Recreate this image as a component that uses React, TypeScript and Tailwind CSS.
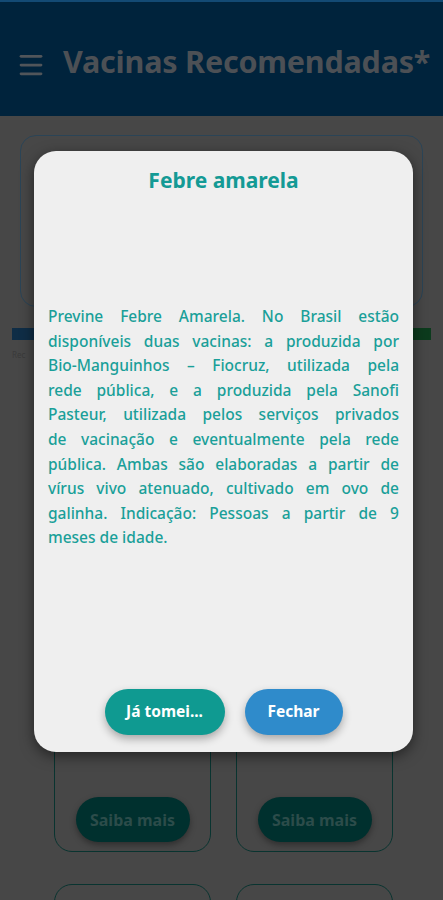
import { Menu } from 'lucide-react'

const bodyLines = [
  'Previne Febre Amarela. No Brasil estão',
  'disponíveis duas vacinas: a produzida por',
  'Bio-Manguinhos – Fiocruz, utilizada pela',
  'rede pública, e a produzida pela Sanofi',
  'Pasteur, utilizada pelos serviços privados',
  'de vacinação e eventualmente pela rede',
  'pública. Ambas são elaboradas a partir de',
  'vírus vivo atenuado, cultivado em ovo de',
  'galinha. Indicação: Pessoas a partir de 9',
  'meses de idade.',
]

const VaccineCard = ({ showButton = true }: { showButton?: boolean }) => (
  <div className="h-[480px] rounded-[18px] border-[1.5px] border-[#093430] flex flex-col items-center justify-end pb-[9px]">
    {showButton && (
      <button className="w-[114px] h-[45px] rounded-full bg-[#00302e] text-[#2c4c4a] text-[16px] font-bold shadow-[0_3px_6px_rgba(0,0,0,0.35)]">
        Saiba mais
      </button>
    )}
  </div>
)

const App = () => {
  return (
    <div className="relative w-[443px] h-[900px] overflow-hidden bg-[#474747] font-['Noto_Sans',sans-serif]">
      {/* Header */}
      <div className="h-[116px] bg-[#00233c] border-t-[2px] border-[#134a74] flex items-center pl-[16px] pt-[12px]">
        <Menu className="w-[30px] h-[30px] text-[#50555a]" strokeWidth={2.2} />
        <h1 className="ml-[17px] mb-[7px] text-[30.5px] font-bold text-[#4c5055] tracking-[-0.2px]">
          Vacinas Recomendadas*
        </h1>
      </div>

      {/* Page content behind the dialog */}
      <div className="px-[20px] pt-[19px]">
        <div className="h-[172px] rounded-[16px] border-[1.5px] border-[#2b4456]" />
      </div>
      <div className="mx-[12px] mt-[21px] h-[12px] flex">
        <div className="flex-1 bg-[#0f2d46]" />
        <div className="w-[21px] bg-[#0c3b1d]" />
      </div>
      <p className="ml-[12px] mt-[10px] text-[8px] leading-[10px] text-[#3a3a3a]">Rec</p>
      <div className="grid grid-cols-[157px_157px] gap-x-[25px] gap-y-[32px] px-[54px] mt-[12px]">
        <VaccineCard />
        <VaccineCard />
        <VaccineCard showButton={false} />
        <VaccineCard showButton={false} />
      </div>

      {/* Dialog */}
      <div className="absolute left-[34px] top-[151px] w-[379px] h-[601px] rounded-[22px] bg-[#efefef] shadow-[0_4px_14px_rgba(0,0,0,0.5)] flex flex-col px-[14px]">
        <h2 className="mt-[15px] text-center text-[21px] leading-[28px] font-bold text-[#149a95]">
          Febre amarela
        </h2>
        <div className="mt-[110px] text-[15.5px] leading-[24.6px] font-medium text-[#1a9f99]">
          {bodyLines.map((line, i) => (
            <span
              key={i}
              className={
                i < bodyLines.length - 1
                  ? 'block text-justify [text-align-last:justify]'
                  : 'block'
              }
            >
              {line}
            </span>
          ))}
        </div>
        <div className="flex-1" />
        <div className="flex justify-center gap-[20px] pb-[17px]">
          <button className="w-[120px] h-[46px] rounded-full bg-[#0f9a91] text-white text-[15.5px] font-bold shadow-[0_4px_8px_rgba(0,0,0,0.3)]">
            Já tomei...
          </button>
          <button className="w-[98px] h-[46px] rounded-full bg-[#2f8bcb] text-white text-[15.5px] font-bold shadow-[0_4px_8px_rgba(0,0,0,0.3)]">
            Fechar
          </button>
        </div>
      </div>
    </div>
  )
}

export default App
